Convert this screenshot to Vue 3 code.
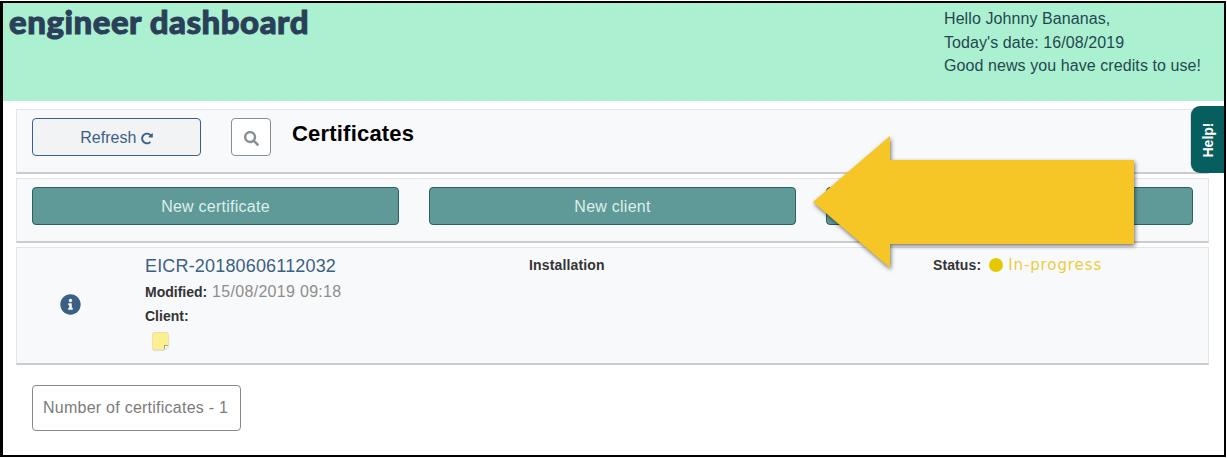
<template>
    <div class="frame">
        <header class="top">
            <h1 class="brand">engineer dashboard</h1>
            <div class="hello">
                <p>Hello {{ user }},</p>
                <p>Today's date: {{ today }}</p>
                <p>Good news you have credits to use!</p>
            </div>
        </header>

        <main class="content">
            <section class="panel toolbar">
                <button class="refresh">
                    Refresh
                    <svg class="redo" viewBox="0 0 512 512"><path fill="currentColor" d="M256.455 8c66.269.119 126.437 26.233 170.859 68.685l35.715-35.715C478.149 25.851 504 36.559 504 57.941V192c0 13.255-10.745 24-24 24H345.941c-21.382 0-32.09-25.851-16.971-40.971l41.75-41.75c-30.864-28.899-70.801-44.907-113.23-45.273-92.398-.798-170.283 73.977-169.484 169.442C88.764 348.009 162.184 424 256 424c41.127 0 79.997-14.678 110.629-41.556 4.743-4.161 11.906-3.908 16.368.553l39.662 39.662c4.872 4.872 4.631 12.815-.482 17.433C378.202 479.813 319.926 504 256 504 119.034 504 8.001 392.967 8 256.002 7.999 119.193 119.646 7.755 256.455 8z"/></svg>
                </button>
                <button class="search">
                    <svg viewBox="0 0 512 512"><path fill="currentColor" d="M505 442.7L405.3 343c-4.5-4.5-10.6-7-17-7H372c27.6-35.3 44-79.7 44-128C416 93.1 322.9 0 208 0S0 93.1 0 208s93.1 208 208 208c48.3 0 92.7-16.4 128-44v16.3c0 6.4 2.5 12.5 7 17l99.7 99.7c9.4 9.4 24.6 9.4 33.9 0l28.3-28.3c9.4-9.4 9.4-24.6.1-34zM208 336c-70.7 0-128-57.2-128-128 0-70.7 57.2-128 128-128 70.7 0 128 57.2 128 128 0 70.7-57.2 128-128 128z"/></svg>
                </button>
                <h2>Certificates</h2>
            </section>

            <section class="panel actions">
                <button v-for="label in actions" :key="label" class="action">{{ label }}</button>
            </section>

            <section class="panel row">
                <div class="info">
                    <svg viewBox="0 0 512 512"><path fill="currentColor" d="M256 8C119.043 8 8 119.083 8 256c0 136.997 111.043 248 248 248s248-111.003 248-248C504 119.083 392.957 8 256 8zm0 110c23.196 0 42 18.804 42 42s-18.804 42-42 42-42-18.804-42-42 18.804-42 42-42zm56 254c0 6.627-5.373 12-12 12h-88c-6.627 0-12-5.373-12-12v-24c0-6.627 5.373-12 12-12h12v-64h-12c-6.627 0-12-5.373-12-12v-24c0-6.627 5.373-12 12-12h64c6.627 0 12 5.373 12 12v100h12c6.627 0 12 5.373 12 12v24z"/></svg>
                </div>
                <div class="cert">
                    <a class="cert-name">{{ cert.name }}</a>
                    <div class="meta"><b>Modified:</b> <span class="date">{{ cert.modified }}</span></div>
                    <div class="meta client"><b>Client:</b></div>
                    <div class="note"><i class="fold"></i></div>
                </div>
                <div class="kind"><b>{{ cert.kind }}</b></div>
                <div class="status">
                    <b>Status:</b>
                    <span class="dot"></span>
                    <span class="state">{{ cert.status }}</span>
                </div>
            </section>

            <div class="count">Number of certificates - 1</div>
        </main>

        <div class="help"><span>Help!</span></div>

        <svg class="arrow" width="340" height="150" viewBox="0 0 340 150">
            <path fill="#f6c627" d="M2 67 L79 1 L79 25 L323 25 L323 109 L79 109 L79 133 Z"/>
        </svg>
    </div>
</template>

<script setup>
const user = 'Johnny Bananas';
const today = '16/08/2019';
const actions = ['New certificate', 'New client', ''];
const cert = {
    name: 'EICR-20180606112032',
    modified: '15/08/2019 09:18',
    kind: 'Installation',
    status: 'In-progress',
};
</script>

<style>
html, body {
    margin: 0;
    background: #fff;
}
</style>

<style scoped>
.frame {
    position: relative;
    box-sizing: border-box;
    width: 1226px;
    height: 456px;
    margin-top: 1px;
    border: 2px solid #000;
    border-left-width: 3px;
    overflow: hidden;
    font-family: "Liberation Sans", Arial, sans-serif;
    font-size: 16px;
    color: #333;
}

.top {
    display: flex;
    justify-content: space-between;
    height: 98px;
    background: #abf1d1;
    color: #24474f;
}

.brand {
    margin: 0 0 0 6px;
    font-family: Lato, sans-serif;
    font-weight: 900;
    font-size: 33px;
    line-height: 36px;
    letter-spacing: 0.5px;
    color: #2a4058;
    -webkit-text-stroke: 1px #2a4058;
}

.hello {
    width: 280px;
    padding-top: 4px;
    line-height: 23.5px;
    font-size: 16px;
    letter-spacing: 0.08px;
}

.hello p {
    margin: 0;
}

.content {
    padding: 8px 15px 0 13px;
}

.panel {
    box-sizing: border-box;
    background: #f8f9fb;
    border: 1px solid #e3e5e8;
    border-bottom: 2px solid #cccccc;
    margin-bottom: 4px;
}

.toolbar {
    display: flex;
    align-items: flex-start;
    height: 65px;
    padding: 8px 15px;
}

button {
    font-family: inherit;
    font-size: 16px;
    box-sizing: border-box;
    height: 38px;
    padding: 2px 0 0;
    border-radius: 4px;
}

.refresh {
    width: 169px;
    background: #f2f3f5;
    border: 1px solid #3c6083;
    color: #3c6083;
}

.redo {
    width: 12px;
    height: 13px;
    vertical-align: -2px;
}

.search {
    display: flex;
    align-items: center;
    justify-content: center;
    width: 40px;
    margin-left: 30px;
    background: #fff;
    border: 1px solid #868e96;
    color: #868e96;
}

.search svg {
    width: 15px;
    height: 15px;
}

.toolbar h2 {
    margin: 0 0 0 21px;
    font-size: 22px;
    line-height: 31px;
    letter-spacing: 0.2px;
    color: #000;
}

.actions {
    display: flex;
    gap: 30px;
    height: 65px;
    padding: 8px 15px;
}

.action {
    flex: 1;
    background: #5f9a98;
    border: 1px solid #2e5f62;
    color: #dcefec;
    letter-spacing: 0.25px;
}

.row {
    display: grid;
    grid-template-columns: 128px 384px 404px 1fr;
    height: 118px;
    font-size: 14px;
}

.info {
    display: flex;
    align-items: center;
    padding: 0 22px 2px 0;
    justify-content: center;
    color: #3c6083;
}

.info svg {
    width: 21px;
    height: 21px;
}

.cert-name {
    display: block;
    margin-top: 5px;
    font-size: 18px;
    line-height: 26px;
    letter-spacing: 0.17px;
    color: #3c6083;
}

.meta {
    line-height: 24px;
    margin-top: 1px;
}

.date {
    margin-left: 1px;
    font-size: 16px;
    letter-spacing: 0.3px;
    color: #8e8e8e;
}

.client {
    margin-top: 0;
}

.note {
    position: relative;
    box-sizing: border-box;
    width: 17px;
    height: 18px;
    margin: 4px 0 0 7px;
    background: #fcef92;
    border: 1px solid #ece2a4;
    border-radius: 3px 3px 6px 3px;
    box-shadow: 0 1px 1px rgba(0, 0, 0, 0.12);
}

.fold {
    position: absolute;
    right: 0;
    bottom: 0;
    width: 4px;
    height: 4px;
    box-sizing: border-box;
    background: #f8f9fb;
    border-top: 1px solid #a9a37a;
    border-left: 1px solid #a9a37a;
    border-radius: 0 0 4px 0;
}

.kind {
    margin-top: 8px;
    line-height: 18px;
    letter-spacing: 0.15px;
}

.status {
    display: flex;
    align-items: center;
    margin-top: 8px;
    height: 18px;
    letter-spacing: 0.1px;
}

.dot {
    width: 14px;
    height: 14px;
    margin-left: 8px;
    border-radius: 50%;
    background: #e6c800;
}

.state {
    margin-left: 5px;
    font-family: "DejaVu Sans", sans-serif;
    font-size: 15px;
    letter-spacing: 0.9px;
    color: #eccd3e;
}

.count {
    box-sizing: border-box;
    width: 209px;
    height: 46px;
    margin: 20px 0 0 16px;
    padding: 0 10px;
    border: 1px solid #888;
    border-radius: 4px;
    font-size: 16px;
    line-height: 44px;
    letter-spacing: 0.25px;
    color: #7b7b7b;
    white-space: nowrap;
}

/* overlays */
.help {
    position: absolute;
    right: 0;
    top: 103px;
    display: flex;
    align-items: center;
    justify-content: center;
    width: 33px;
    height: 67px;
    background: #075e5e;
    border-radius: 9px 0 0 9px;
    box-shadow: -1px 0 0 #d7dde0;
}

.help span {
    transform: rotate(-90deg);
    font-size: 14px;
    font-weight: bold;
    color: #fff;
}

.arrow {
    position: absolute;
    left: 808px;
    top: 132px;
    filter: drop-shadow(1px 2px 2px rgba(0, 0, 0, 0.55));
}
</style>
